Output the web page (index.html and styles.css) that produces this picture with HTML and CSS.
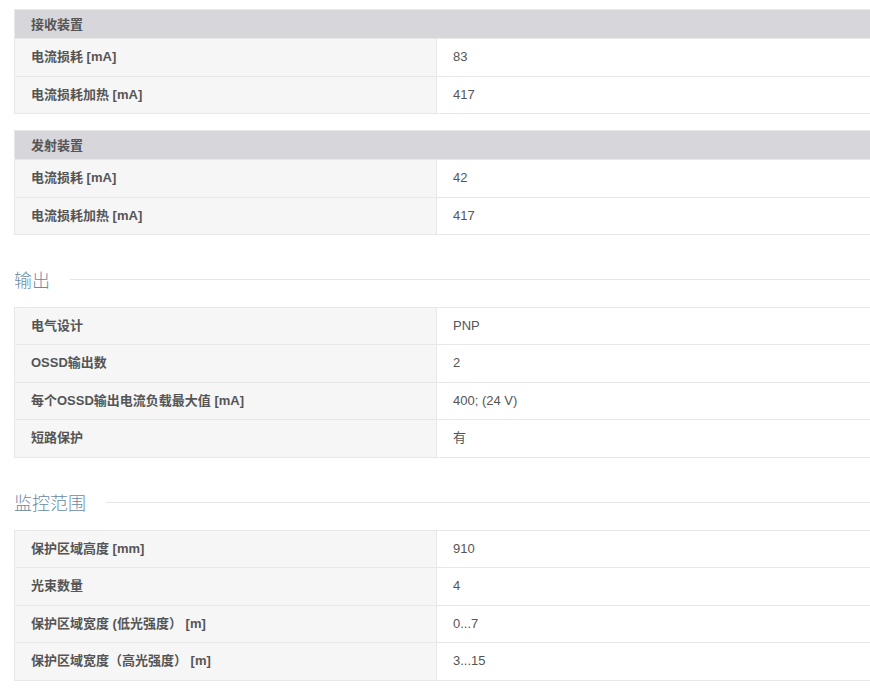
FILE: index.html
```html
<!DOCTYPE html>
<html lang="zh">
<head>
<meta charset="utf-8">
<link rel="stylesheet" href="styles.css">
</head>
<body>
<div class="page">
  <table class="spec">
    <colgroup><col class="ck"><col class="cv"></colgroup>
    <tr><th colspan="2">接收装置</th></tr>
    <tr><td class="k">电流损耗 [mA]</td><td class="v">83</td></tr>
    <tr><td class="k">电流损耗加热 [mA]</td><td class="v">417</td></tr>
  </table>
  <table class="spec">
    <colgroup><col class="ck"><col class="cv"></colgroup>
    <tr><th colspan="2">发射装置</th></tr>
    <tr><td class="k">电流损耗 [mA]</td><td class="v">42</td></tr>
    <tr><td class="k">电流损耗加热 [mA]</td><td class="v">417</td></tr>
  </table>

  <div class="section-title"><span>输出</span><div class="rule"></div></div>
  <table class="spec">
    <colgroup><col class="ck"><col class="cv"></colgroup>
    <tr><td class="k">电气设计</td><td class="v">PNP</td></tr>
    <tr><td class="k">OSSD输出数</td><td class="v">2</td></tr>
    <tr><td class="k">每个OSSD输出电流负载最大值 [mA]</td><td class="v">400; (24 V)</td></tr>
    <tr><td class="k">短路保护</td><td class="v">有</td></tr>
  </table>

  <div class="section-title"><span>监控范围</span><div class="rule"></div></div>
  <table class="spec">
    <colgroup><col class="ck"><col class="cv"></colgroup>
    <tr><td class="k">保护区域高度 [mm]</td><td class="v">910</td></tr>
    <tr><td class="k">光束数量</td><td class="v">4</td></tr>
    <tr><td class="k">保护区域宽度 (低光强度） [m]</td><td class="v">0...7</td></tr>
    <tr><td class="k">保护区域宽度（高光强度） [m]</td><td class="v">3...15</td></tr>
  </table>
</div>
</body>
</html>
```
FILE: styles.css
```css
html, body {
  margin: 0;
  padding: 0;
  overflow: hidden;
  background: #ffffff;
}
body {
  font-family: "Liberation Sans", "Noto Sans CJK SC", Arial, sans-serif;
  font-size: 13px;
  color: #555555;
}
.page {
  padding: 9px 0 0 14px;
  width: 880px;
}
.spec {
  border-collapse: collapse;
  width: 880px;
  table-layout: fixed;
  margin-bottom: 16px;
}
.spec col.ck {
  width: 422px;
}
.spec th, .spec td {
  border: 1px solid #e8e8e8;
  text-align: left;
  line-height: 16px;
}
.spec th {
  background: #d6d6db;
  font-weight: bold;
  padding: 6px 16px 5px;
  line-height: 17px;
}
.spec td {
  padding: 10px 16px 10px;
}
.spec tr:nth-child(even) td {
  padding-bottom: 11px;
}
.spec td.k {
  background: #f6f6f6;
  font-weight: bold;
}
.spec td.v {
  background: #ffffff;
  font-weight: normal;
}
.section-title {
  display: flex;
  align-items: center;
  gap: 20px;
  margin: 32px 0 16px;
  height: 24px;
  font-family: "Noto Sans CJK SC", sans-serif;
  font-size: 18px;
  color: #6b8aa5;
  font-weight: 300;
}
.section-title .rule {
  flex: 1;
  height: 1px;
  background: #e6e6e6;
}
```
